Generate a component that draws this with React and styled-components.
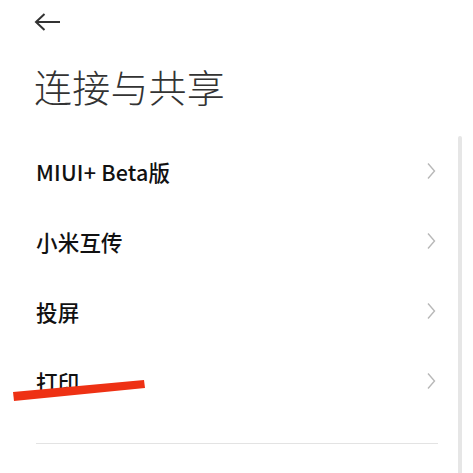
import React from 'react';
import { styled, createGlobalStyle } from 'styled-components';

const Global = createGlobalStyle`
  html, body {
    margin: 0;
    padding: 0;
    background: #fff;
  }
  body {
    font-family: "Noto Sans CJK SC", "Noto Sans", sans-serif;
  }
`

const Page = styled.div`
  position: relative;
  width: 473px;
  height: 473px;
  overflow: hidden;
  background: #fff;
  display: flex;
  flex-direction: column;
`

const TopBar = styled.div`
  height: 44px;
  display: flex;
  align-items: center;
  padding-left: 34px;
`

const BackButton = styled.button`
  border: none;
  background: none;
  padding: 0;
  display: flex;
  cursor: pointer;
`

const Title = styled.h1`
  margin: 20px 0 0 34px;
  font-size: 38px;
  font-weight: 300;
  line-height: 44px;
  color: #333;
  letter-spacing: 0.2px;
`

const List = styled.div`
  margin-top: 28px;
  display: flex;
  flex-direction: column;
`

const Row = styled.div`
  height: 70px;
  display: flex;
  align-items: center;
  justify-content: space-between;
  padding: 0 36px 0 36px;
`

const Label = styled.span`
  font-size: 21.5px;
  font-weight: 500;
  color: #111;
  letter-spacing: 0.2px;
`

const Divider = styled.div`
  margin: 27px 35px 0 36px;
  height: 1px;
  background: #e3e3e3;
`

const Scrollbar = styled.div`
  position: absolute;
  left: 458px;
  top: 136px;
  width: 4px;
  bottom: 0;
  background: #e6e6e6;
  border-radius: 2px 2px 0 0;
`

const Mark = styled.svg`
  position: absolute;
  left: 0;
  top: 0;
  pointer-events: none;
`

const items = ['MIUI+ Beta版', '小米互传', '投屏', '打印'];

function Chevron() {
  return (
    <svg width="12" height="18" viewBox="0 0 12 18">
      <path d="M3 1.5 L9.5 9 L3 16.5" fill="none" stroke="#b8b8b8" strokeWidth="1.4" />
    </svg>
  );
}

export default function App() {
  return (
    <Page>
      <Global />
      <TopBar>
        <BackButton aria-label="返回">
          <svg width="28" height="20" viewBox="0 0 28 20">
            <path d="M2 10 H26 M10.5 2 L2 10 L10.5 18" fill="none" stroke="#333" strokeWidth="2" />
          </svg>
        </BackButton>
      </TopBar>
      <Title>连接与共享</Title>
      <List>
        {items.map((label) => (
          <Row key={label}>
            <Label>{label}</Label>
            <Chevron />
          </Row>
        ))}
      </List>
      <Divider />
      <Scrollbar />
      <Mark width="473" height="473" viewBox="0 0 473 473">
        <polygon points="13,392 144,380 145,388 14,401" fill="#ee3114" />
      </Mark>
    </Page>
  );
}
